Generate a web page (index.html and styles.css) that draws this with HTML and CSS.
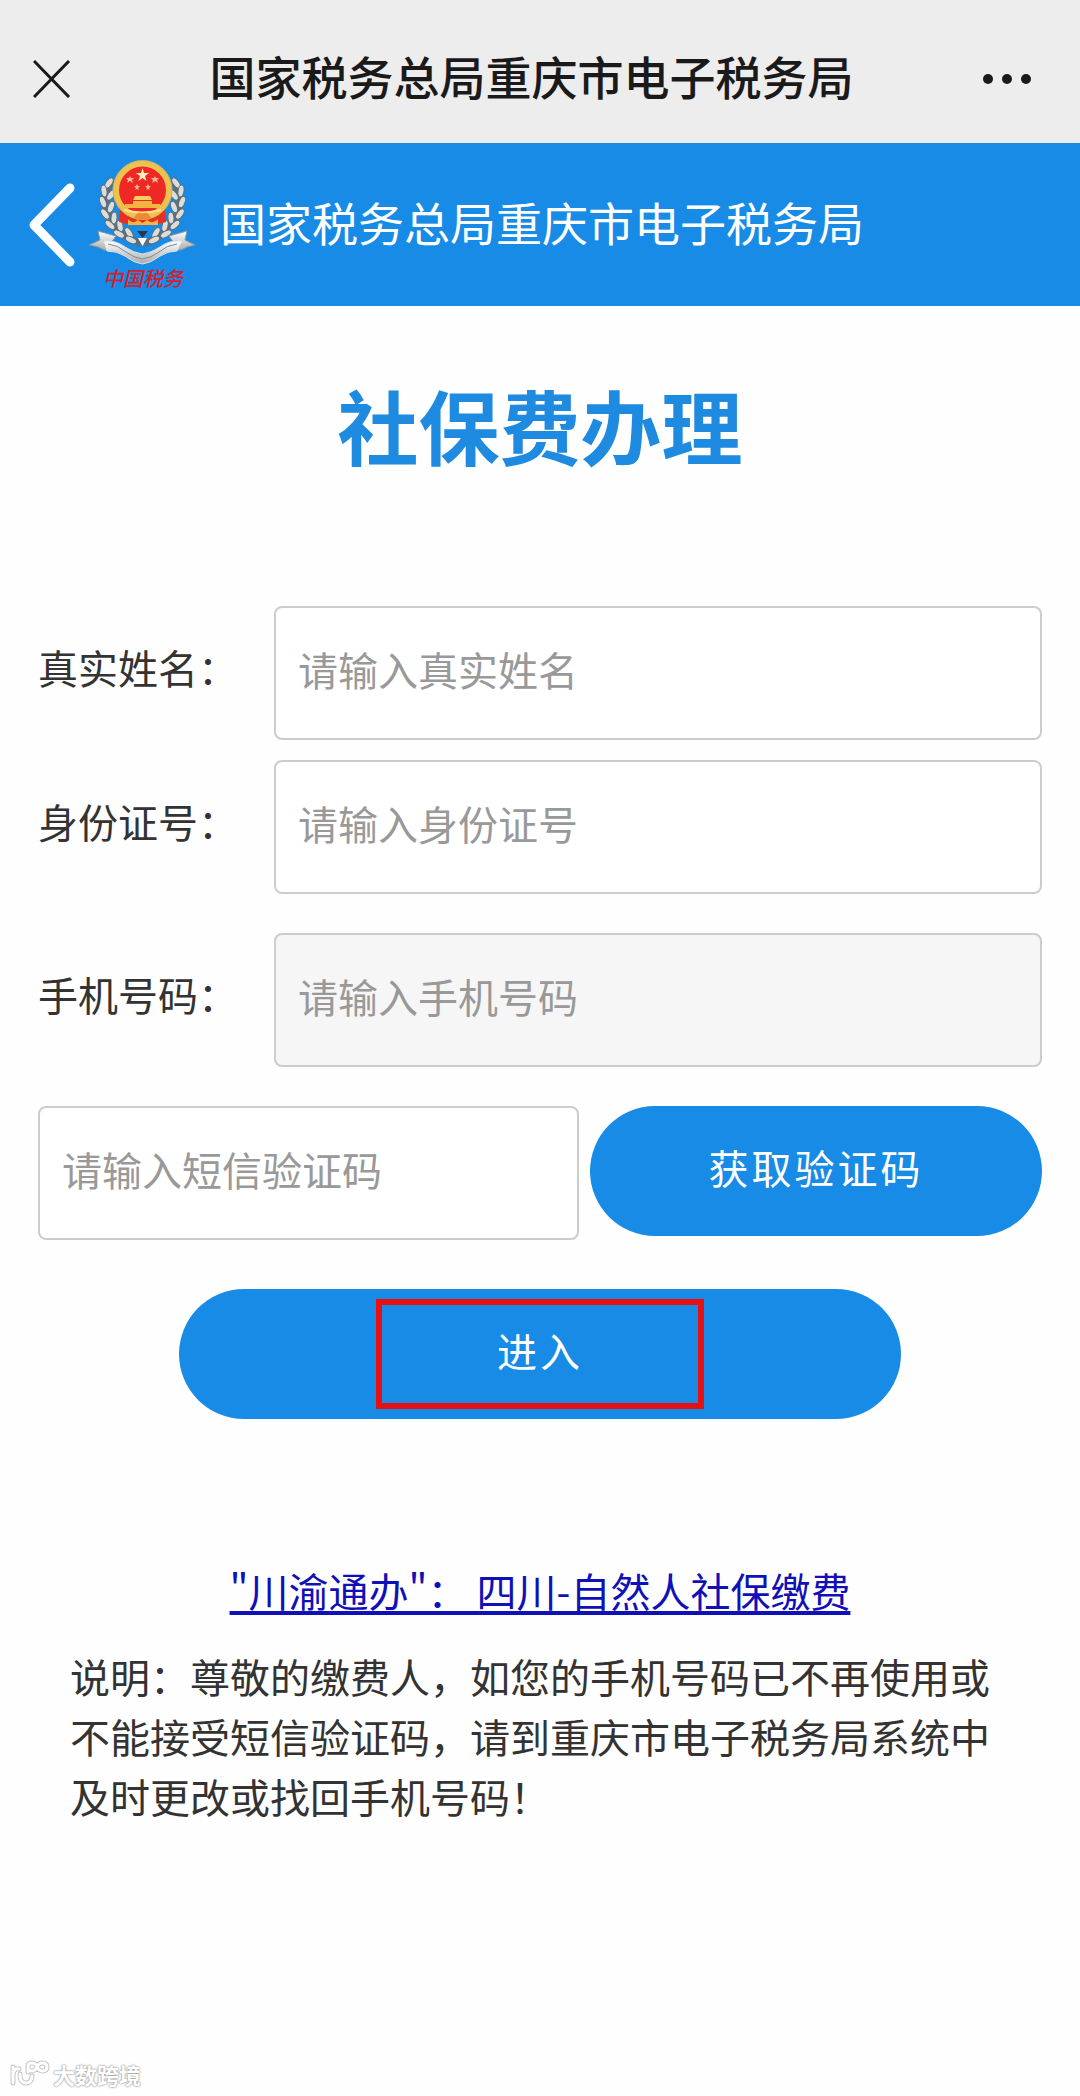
FILE: index.html
```html
<!DOCTYPE html>
<html lang="zh-CN">
<head>
    <meta charset="UTF-8">
    <meta name="viewport" content="width=device-width, initial-scale=1.0">
    <title>国家税务总局重庆市电子税务局</title>
    <link rel="stylesheet" href="styles.css">
</head>
<body>
    <div class="topbar">
        <button type="button" class="icon-btn" aria-label="关闭">
            <svg width="48" height="38" viewBox="0 0 48 38"><path d="M1 1L36 37M36 1L1 37" fill="none" stroke="#1a1a1a" stroke-width="3"/></svg>
        </button>
        <div class="topbar-title">国家税务总局重庆市电子税务局</div>
        <button type="button" class="icon-btn" aria-label="更多">
            <svg width="50" height="12" viewBox="0 0 50 12" fill="#1a1a1a"><circle cx="6" cy="6" r="5"/><circle cx="25" cy="6" r="5"/><circle cx="44" cy="6" r="5"/></svg>
        </button>
    </div>

    <header class="header">
        <a href="#" class="back" aria-label="返回">
            <svg width="48" height="84" viewBox="0 0 48 84"><path d="M42 5L6 42L42 79" fill="none" stroke="#fff" stroke-width="9" stroke-linecap="round" stroke-linejoin="round"/></svg>
        </a>
        <svg class="emblem" width="108" height="140" viewBox="8 8 108 140">
            <defs>
                <linearGradient id="silver" x1="0" y1="0" x2="0" y2="1">
                    <stop offset="0" stop-color="#ffffff"/>
                    <stop offset="1" stop-color="#a9adb0"/>
                </linearGradient>
                <g id="leaf">
                    <ellipse rx="3" ry="6" fill="#dcdcd8" stroke="#5c6b78" stroke-width="1"/>
                </g>
                <g id="branch">
                    <path d="M32 33C22 48 24 70 38 83C45 90 54 94 61 97" fill="none" stroke="#5f6e79" stroke-width="7"/>
                    <use href="#leaf" transform="translate(29 36) rotate(35)"/>
                    <use href="#leaf" transform="translate(24 44) rotate(-8)"/>
                    <use href="#leaf" transform="translate(31 48) rotate(35)"/>
                    <use href="#leaf" transform="translate(23 55) rotate(-22)"/>
                    <use href="#leaf" transform="translate(31 60) rotate(22)"/>
                    <use href="#leaf" transform="translate(25 67) rotate(-35)"/>
                    <use href="#leaf" transform="translate(34 71) rotate(5)"/>
                    <use href="#leaf" transform="translate(30 78) rotate(-48)"/>
                    <use href="#leaf" transform="translate(40 79) rotate(-12)"/>
                    <use href="#leaf" transform="translate(39 87) rotate(-60)"/>
                    <use href="#leaf" transform="translate(49 86) rotate(-32)"/>
                    <use href="#leaf" transform="translate(51 93) rotate(-65)"/>
                </g>
            </defs>
            <use href="#branch"/>
            <use href="#branch" transform="translate(125 0) scale(-1 1)"/>
            <path d="M57 84L62.500 91L68 84" fill="#26394c"/>
            <path d="M58 91L62.500 99L67 91Z" fill="#fff"/>
            <path d="M40 58L85 58L86 75Q74 79 62.500 78Q50 79 39 75Z" fill="#ea2e20"/>
            <circle cx="62.500" cy="43" r="26.500" fill="#ed2825" stroke="#efc24f" stroke-width="6"/>
            <circle cx="62.500" cy="43" r="29.500" fill="none" stroke="#c9b36a" stroke-width="1"/>
            <path d="M62.500 21L64 26L69 26L65 29L66.500 34L62.500 31L58.500 34L60 29L56 26L61 26Z" fill="#ffeebb"/>
            <g fill="#f9b88e">
                <path d="M50 29l1 2h3l-2 2 1 3-3-2-3 2 1-3-2-2h3z"/>
                <path d="M75 29l1 2h3l-2 2 1 3-3-2-3 2 1-3-2-2h3z"/>
                <path d="M57 37l1 2h2l-2 2 1 2-2-1-2 1 1-2-2-2h2z"/>
                <path d="M68 37l1 2h2l-2 2 1 2-2-1-2 1 1-2-2-2h2z"/>
            </g>
            <path d="M55 49H70L72 53H53Z" fill="#f6cf61"/>
            <path d="M53 54H72V57H80V61H45V57H53Z" fill="#f2b63f"/>
            <path d="M44 63Q62 68 81 63" fill="none" stroke="#fbe08a" stroke-width="2"/>
            <path d="M54 71Q58 63 62.500 67Q67 63 71 71Q67 75 62.500 72Q58 75 54 71Z" fill="#ed8a32"/>
            <path d="M48 72Q52 78 58 73L62.500 76L67 73Q73 78 78 72V78H48Z" fill="#f4b543"/>
            <path d="M18 84L36 89L31 96L38 103L24 103L18 100L9 98L20 93Z" fill="url(#silver)" stroke="#8b969e"/>
            <path d="M107 84L89 89L94 96L87 103L101 103L107 100L115 98L105 93Z" fill="url(#silver)" stroke="#8b969e"/>
            <path d="M24 94Q36 93 45 100Q54 106 62.500 107Q71 106 80 100Q89 93 102 94L97 104Q88 104 80 109Q71 116 62.500 117Q54 116 45 109Q37 104 27 104Z" fill="url(#silver)" stroke="#dfe3e5"/>
            <path d="M28 97Q38 98 46 105Q54 111 62.500 112Q71 111 79 105Q87 98 97 97" fill="none" stroke="#818a90" stroke-width="1"/>
            <text class="emblem-text" x="63" y="139" text-anchor="middle">中国税务</text>
        </svg>
        <div class="header-title">国家税务总局重庆市电子税务局</div>
    </header>

    <main class="main">
        <h1>社保费办理</h1>
        <form class="form">
            <div class="row">
                <label for="name">真实姓名：</label>
                <input type="text" id="name" placeholder="请输入真实姓名">
            </div>
            <div class="row row-id">
                <label for="idcard">身份证号：</label>
                <input type="text" id="idcard" placeholder="请输入身份证号">
            </div>
            <div class="row">
                <label for="phone">手机号码：</label>
                <input type="tel" id="phone" placeholder="请输入手机号码" readonly>
            </div>
            <div class="row row-code">
                <input type="text" id="code" aria-label="短信验证码" placeholder="请输入短信验证码">
                <button type="button" class="btn btn-code">获取验证码</button>
            </div>
            <button type="button" class="btn btn-enter"><span class="mark">进入</span></button>
        </form>
        <a href="#" class="link">"川渝通办"： 四川-自然人社保缴费</a>
        <p class="note">说明：尊敬的缴费人，如您的手机号码已不再使用或不能接受短信验证码，请到重庆市电子税务局系统中及时更改或找回手机号码！</p>
    </main>

    <footer class="footer">
        <svg width="40" height="28" viewBox="0 0 40 28" fill="none" stroke-linecap="round">
            <g stroke="#c4c4c4" stroke-width="5">
                <path d="M3 7V23M3 14Q4 8 9 9M10 14Q10 24 17 23Q22 22 22 16"/>
                <path d="M18 12V6Q18 3 22 3Q26 3 27 7Q29 11 32 11Q37 11 37 7Q37 3 32 3Q29 3 27 7Q25 11 22 11Q18 11 18 8"/>
            </g>
            <g stroke="#fff" stroke-width="3">
                <path d="M3 7V23M3 14Q4 8 9 9M10 14Q10 24 17 23Q22 22 22 16"/>
                <path d="M18 12V6Q18 3 22 3Q26 3 27 7Q29 11 32 11Q37 11 37 7Q37 3 32 3Q29 3 27 7Q25 11 22 11Q18 11 18 8"/>
            </g>
        </svg>
        <span>大数跨境</span>
    </footer>
</body>
</html>
```

FILE: styles.css
```css
* {
    box-sizing: border-box;
}
body {
    margin: 0;
    min-height: 100vh;
    display: flex;
    flex-direction: column;
    background-color: #fefefe;
    color: #333;
    font-family: "Noto Sans CJK SC", sans-serif;
    font-size: 40px;
    line-height: 60px;
}
input, button {
    font-family: inherit;
    font-size: inherit;
}
svg {
    display: block;
}
.topbar {
    display: flex;
    align-items: center;
    justify-content: space-between;
    height: 143px;
    padding: 15px 48px 0 33px;
    background-color: #ededed;
}
.icon-btn {
    padding: 0;
    border: none;
    background: none;
    cursor: pointer;
}
.topbar-title {
    padding-bottom: 8px;
    color: #1a1a1a;
    font-size: 46px;
    font-weight: 500;
}
.header {
    display: flex;
    align-items: center;
    height: 163px;
    padding-left: 28px;
    background-color: #178be6;
    color: #fff;
}
.emblem {
    margin: 0 24px 0 12px;
}
.emblem-text {
    fill: #d3202c;
    font-family: "Noto Sans CJK SC", sans-serif;
    font-size: 20px;
    font-style: italic;
    font-weight: 500;
}
.header-title {
    padding-bottom: 8px;
    font-size: 46px;
}
.main {
    flex: 1;
}
h1 {
    margin: 58px 0 122px;
    color: #1e8ae0;
    font-size: 81px;
    font-weight: 700;
    line-height: 120px;
    text-align: center;
}
.form {
    padding: 0 38px;
}
.row {
    display: flex;
    align-items: center;
    margin-bottom: 20px;
}
.row-id, .row-code {
    margin-bottom: 39px;
}
.row label {
    flex: 0 0 236px;
    padding-bottom: 12px;
}
.row input {
    flex: 1;
    min-width: 0;
    height: 134px;
    padding: 0 22px 8px;
    border: 2px solid #ccc;
    border-radius: 8px;
    background-color: #fff;
    color: #333;
}
.row input::placeholder {
    color: #999;
    opacity: 1;
}
.row input:read-only {
    background-color: #f6f6f6;
}
.row-code {
    align-items: flex-start;
    gap: 11px;
    margin: 39px 0 49px;
}
.btn {
    height: 130px;
    padding: 0 0 8px;
    border: none;
    border-radius: 65px;
    background-color: #178be6;
    color: #fff;
    letter-spacing: 3px;
    cursor: pointer;
}
.btn-code {
    flex: 0 0 45%;
}
.btn-enter {
    display: flex;
    align-items: center;
    justify-content: center;
    width: 72%;
    margin: 0 auto;
    padding: 0;
}
/* 红框标注 */
.mark {
    width: 328px;
    padding-bottom: 8px;
    border: 6px solid #e60f14;
    line-height: 90px;
}
.link {
    display: block;
    margin-top: 141px;
    color: #1010b8;
    text-align: center;
    text-decoration: underline;
    text-decoration-thickness: 4px;
    text-decoration-skip-ink: none;
    text-underline-offset: 4px;
}
.note {
    margin: 26px 65px 0 70px;
}
.footer {
    display: flex;
    align-items: center;
    gap: 3px;
    padding: 0 10px 8px;
    color: #fff;
    font-size: 22px;
    font-weight: 700;
    line-height: 28px;
    text-shadow: 0 0 2px #999, 0 0 2px #999;
}
```
